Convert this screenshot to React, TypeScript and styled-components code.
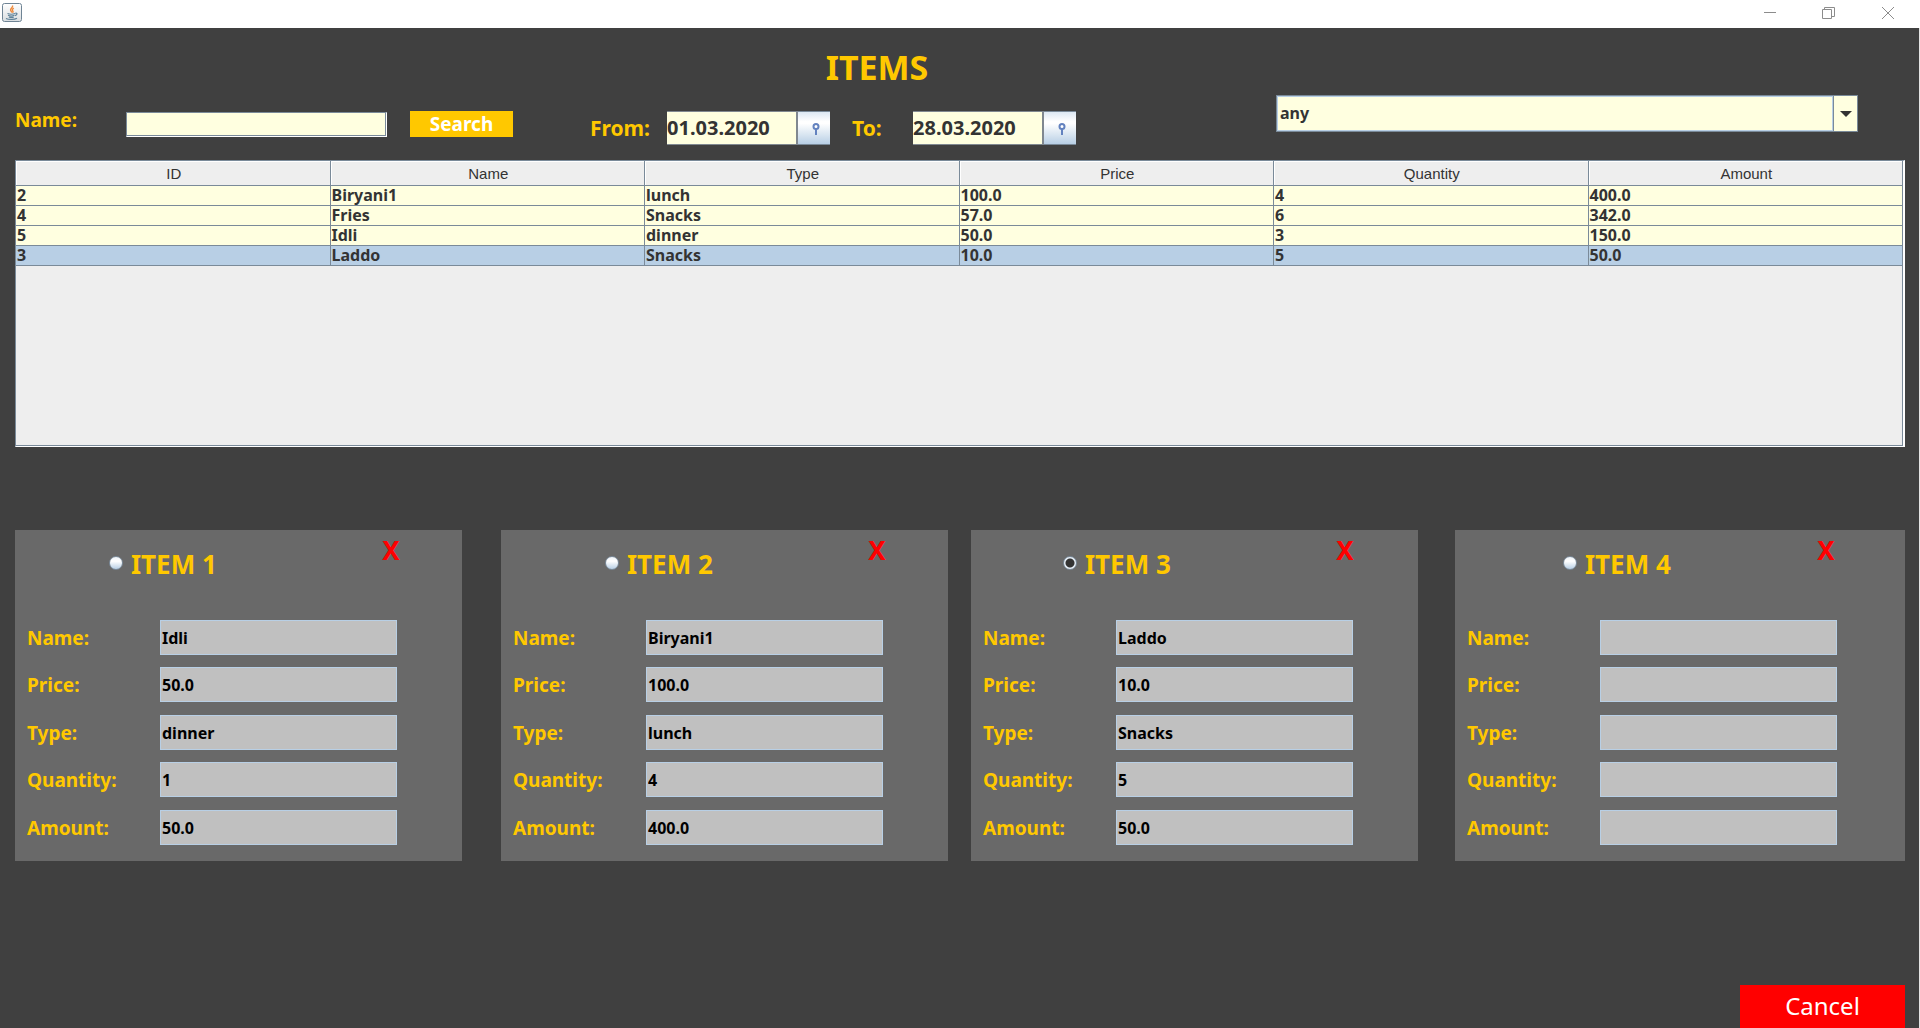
import React, { useState } from 'react';
import styled, { createGlobalStyle } from 'styled-components';

const gold = '#ffc800';
const cream = '#ffffe0';
const slate = '#7a8a99';
const sky = '#b8cfe5';
const sans = '"Noto Sans", "Open Sans", sans-serif';

const GlobalStyle = createGlobalStyle`
  * { box-sizing: border-box; }
  body { margin: 0; background: #404040; font-family: ${sans}; }
  button, input, select { font-family: inherit; margin: 0; }
`;

const Frame = styled.div`
  display: flex;
  flex-direction: column;
  min-height: 100vh;
`;

const TitleBar = styled.header`
  display: flex;
  align-items: flex-start;
  justify-content: space-between;
  height: 28px;
  padding: 2px 3px 0 2px;
  background: #fff;
`;

const WindowButtons = styled.div`
  display: flex;
`;

const WindowButton = styled.button`
  display: flex;
  align-items: center;
  justify-content: center;
  width: 59px;
  height: 22px;
  padding: 0;
  border: 0;
  background: none;
`;

const Main = styled.main`
  display: flex;
  flex: 1;
  flex-direction: column;
  padding: 0 14px 0 15px;
  border-right: 1px solid #e4e4e4;
`;

const Heading = styled.h1`
  margin: 0;
  padding: 17px 166px 0 0;
  color: ${gold};
  font-size: 34px;
  line-height: 44px;
  text-align: center;
`;

const Filters = styled.form`
  display: flex;
  align-items: flex-start;
  height: 65px;
  margin-top: 6px;
`;

const SearchGroup = styled.div`
  display: flex;
  align-items: center;
  padding-top: 15px;
`;

const NameLabel = styled.label`
  width: 111px;
  padding-bottom: 8px;
  color: ${gold};
  font-size: 19px;
  font-weight: 700;
  line-height: 20px;
`;

const NameInput = styled.input`
  width: 261px;
  height: 25px;
  padding: 0 3px;
  border: 1px solid ${slate};
  outline: 0;
  background: ${cream};
  box-shadow: inset -1px -1px 0 ${slate};
  border-right-color: #fff;
  border-bottom-color: #fff;
  font-size: 16px;
`;

const SearchButton = styled.button`
  width: 103px;
  height: 26px;
  margin-left: 23px;
  padding: 0;
  border: 0;
  background: ${gold};
  color: #fff;
  font-size: 19px;
  font-weight: 700;
  line-height: 26px;
`;

const DateGroup = styled.div<{ $lead: number; $labelWidth: number }>`
  display: grid;
  grid-template-columns: ${(p) => p.$labelWidth}px 131px 32px;
  align-items: center;
  margin-left: ${(p) => p.$lead}px;
  padding-top: 16px;
`;

const DateLabel = styled.label`
  color: ${gold};
  font-size: 21px;
  font-weight: 700;
  line-height: 32px;
`;

const DateInput = styled.input`
  width: 100%;
  height: 34px;
  padding: 0 0 1px;
  border: solid #808890;
  border-width: 1px 2px 1px 0;
  outline: 0;
  background: ${cream};
  color: #333;
  font-size: 20px;
  font-weight: 700;
`;

const DateButton = styled.button`
  display: flex;
  align-items: center;
  justify-content: center;
  height: 34px;
  padding: 2px 0 0 4px;
  border: solid ${slate};
  border-width: 1px 0;
  background: linear-gradient(#dde8f3, #fff 30%, #fff 36%, ${sky});
`;

const TypePicker = styled.div`
  display: grid;
  flex: 1;
  margin: 0 47px 0 200px;
`;

const TypeSelect = styled.select`
  grid-area: 1 / 1;
  width: 100%;
  height: 37px;
  padding: 0 30px 1px 3px;
  border: 1px solid ${slate};
  border-radius: 0;
  outline: 0;
  appearance: none;
  background: ${cream};
  color: #333;
  font-size: 16px;
  font-weight: 700;
  box-shadow: inset 1px 1px 0 ${sky}, inset 0 -1px 0 ${sky};
`;

const PickerArrow = styled.span`
  display: flex;
  grid-area: 1 / 1;
  align-items: center;
  justify-content: center;
  justify-self: end;
  width: 23px;
  height: 35px;
  margin: 1px 1px 0 0;
  background: ${cream};
  box-shadow: -1px 0 0 ${slate}, -2px 0 0 ${sky};
  pointer-events: none;
`;

const TablePane = styled.section`
  height: 287px;
  border: 1px solid ${slate};
  border-right: 2px solid #fff;
  border-bottom: 1px solid #fff;
  background: #eee;
  box-shadow: inset -1px -1px 0 ${slate};
`;

const Table = styled.table`
  width: 100%;
  border-spacing: 0;
  table-layout: fixed;
`;

const HeadCell = styled.th`
  height: 25px;
  padding: 2px 0 0 2px;
  border: solid ${slate};
  border-width: 0 1px 1px 0;
  background: #eee;
  box-shadow: inset 1px 1px 0 #fff;
  color: #333;
  font: 400 15px/22px "Liberation Sans", Arial, sans-serif;
`;

const Row = styled.tr<{ $selected: boolean }>`
  background: ${(p) => (p.$selected ? sky : cream)};
`;

const Cell = styled.td`
  height: 20px;
  padding: 0 1px;
  border: solid ${slate};
  border-width: 0 1px 1px 0;
  color: #333;
  font-size: 16px;
  font-weight: 700;
  line-height: 19px;
`;

const Cards = styled.section`
  display: flex;
  margin-top: 83px;
`;

const Card = styled.article<{ $lead: number; $share: number }>`
  flex: ${(p) => p.$share} 1 0;
  min-width: 0;
  margin-left: ${(p) => p.$lead}px;
  padding-bottom: 16px;
  background: #696969;
`;

const CardHead = styled.div<{ $closeAt: number }>`
  display: grid;
  grid-template-columns: ${(p) => p.$closeAt}px 48px;
  height: 90px;
  align-items: start;
`;

const CardTitle = styled.label<{ $indent: number }>`
  display: flex;
  align-items: center;
  gap: 8px;
  padding: 16px 0 0 ${(p) => p.$indent}px;
  color: ${gold};
  font-size: 26px;
  font-weight: 700;
  line-height: 36px;
`;

const Radio = styled.input`
  width: 14px;
  height: 14px;
  margin-bottom: 2px;
  border: 1px solid ${slate};
  border-radius: 50%;
  appearance: none;
  background: linear-gradient(#eef3f9, #fff 35%, ${sky});
  &:checked {
    background: radial-gradient(circle, #333 0 4px, #e8f0f8 5px);
  }
`;

const CloseButton = styled.button`
  height: 40px;
  padding: 0;
  border: 0;
  background: none;
  color: #f00;
  font-size: 26px;
  font-weight: 700;
  line-height: 40px;
`;

const Fields = styled.div`
  display: grid;
  row-gap: 12px;
`;

const FieldRow = styled.div`
  display: grid;
  grid-template-columns: 133px 237px;
  align-items: center;
  height: 35px;
  padding-left: 12px;
  &:nth-child(2n + 3) {
    margin-top: 1px;
  }
`;

const FieldLabel = styled.label`
  padding-top: 1px;
  color: ${gold};
  font-size: 19px;
  font-weight: 700;
  line-height: 34px;
`;

const FieldInput = styled.input`
  width: 100%;
  height: 35px;
  padding: 0 1px;
  border: 1px solid ${sky};
  outline: 0;
  background: #c0c0c0;
  color: #000;
  font-size: 16px;
  font-weight: 700;
`;

const CancelButton = styled.button`
  align-self: flex-end;
  width: 165px;
  height: 43px;
  margin-top: auto;
  padding: 0 0 1px;
  border: 0;
  background: #f00;
  color: #fff;
  font-size: 24px;
  line-height: 42px;
`;

const columns = ['ID', 'Name', 'Type', 'Price', 'Quantity', 'Amount'];

const rows = [
  ['2', 'Biryani1', 'lunch', '100.0', '4', '400.0'],
  ['4', 'Fries', 'Snacks', '57.0', '6', '342.0'],
  ['5', 'Idli', 'dinner', '50.0', '3', '150.0'],
  ['3', 'Laddo', 'Snacks', '10.0', '5', '50.0'],
];

const fieldNames = ['Name', 'Price', 'Type', 'Quantity', 'Amount'];

const cards = [
  { lead: 0, share: 447, indent: 94, closeAt: 352, values: ['Idli', '50.0', 'dinner', '1', '50.0'] },
  { lead: 39, share: 447, indent: 104, closeAt: 352, values: ['Biryani1', '100.0', 'lunch', '4', '400.0'] },
  { lead: 23, share: 447, indent: 92, closeAt: 350, values: ['Laddo', '10.0', 'Snacks', '5', '50.0'] },
  { lead: 37, share: 450, indent: 108, closeAt: 347, values: ['', '', '', '', ''] },
];

const JavaIcon = () => (
  <svg width="20" height="20" viewBox="0 0 20 20" aria-hidden="true">
    <defs>
      <linearGradient id="tile" x1="0" y1="0" x2="0" y2="1">
        <stop offset="0" stopColor="#fff" />
        <stop offset="1" stopColor="#d9dde0" />
      </linearGradient>
    </defs>
    <rect x="0.5" y="1.5" width="19" height="18" rx="2" fill="url(#tile)" stroke="#6f8495" />
    <path d="M10.5 3.5c1 2-2.6 2.8-1.9 4.8.3.9 1 1.400 1.200 2.200M11.800 6.200c-1.800 1-1.600 2-.9 2.900.4.6.1 1.200-.4 1.700" fill="none" stroke="#ee8a3c" strokeWidth="1.4" />
    <path d="M5.500 11.500c2 .8 5.500.8 7.500 0M6 13.300c1.800.8 4.800.8 6.500 0M6.800 15c1.500.6 3.600.6 5 0M13.300 11.300c2.300-.5 2.300 1.600-.3 2.300M4 16.500c3 1.300 8.500 1.200 11-.3" fill="none" stroke="#5f8299" strokeWidth="1.2" />
  </svg>
);

const PinIcon = () => (
  <svg width="8" height="12" viewBox="0 0 8 12" aria-hidden="true">
    <circle cx="4" cy="3.5" r="2.5" fill="#fff" stroke="#6382bf" strokeWidth="2" />
    <path d="M4 5.5V12" stroke="#6382bf" strokeWidth="2" />
  </svg>
);

export default function App() {
  const [active, setActive] = useState(2);

  return (
    <Frame>
      <GlobalStyle />
      <TitleBar>
        <JavaIcon />
        <WindowButtons>
          <WindowButton aria-label="Minimize">
            <svg width="12" height="12" viewBox="0 0 12 12"><path d="M0 5.5H12" stroke="#8c8c8c" /></svg>
          </WindowButton>
          <WindowButton aria-label="Restore">
            <svg width="13" height="12" viewBox="0 0 13 12" fill="none" stroke="#8c8c8c">
              <path d="M0.5 2.5H9.5V11.5H0.5ZM2.5 2.5V0.5H12.5V9.5H9.5" />
            </svg>
          </WindowButton>
          <WindowButton aria-label="Close">
            <svg width="12" height="12" viewBox="0 0 12 12"><path d="M0 0L12 12M12 0L0 12" stroke="#8c8c8c" /></svg>
          </WindowButton>
        </WindowButtons>
      </TitleBar>

      <Main>
        <Heading>ITEMS</Heading>

        <Filters onSubmit={(e) => e.preventDefault()}>
          <SearchGroup>
            <NameLabel htmlFor="search-name">Name:</NameLabel>
            <NameInput id="search-name" type="text" />
            <SearchButton type="submit">Search</SearchButton>
          </SearchGroup>
          <DateGroup $lead={77} $labelWidth={77}>
            <DateLabel htmlFor="date-from">From:</DateLabel>
            <DateInput id="date-from" type="text" defaultValue="01.03.2020" />
            <DateButton type="button" aria-label="Pick start date"><PinIcon /></DateButton>
          </DateGroup>
          <DateGroup $lead={22} $labelWidth={61}>
            <DateLabel htmlFor="date-to">To:</DateLabel>
            <DateInput id="date-to" type="text" defaultValue="28.03.2020" />
            <DateButton type="button" aria-label="Pick end date"><PinIcon /></DateButton>
          </DateGroup>
          <TypePicker>
            <TypeSelect aria-label="Item type" defaultValue="any">
              <option>any</option>
              <option>lunch</option>
              <option>dinner</option>
              <option>Snacks</option>
            </TypeSelect>
            <PickerArrow>
              <svg width="12" height="6" viewBox="0 0 12 6"><path d="M0 0H12L6 6Z" fill="#333" /></svg>
            </PickerArrow>
          </TypePicker>
        </Filters>

        <TablePane>
          <Table>
            <thead>
              <tr>
                {columns.map((c) => <HeadCell key={c} scope="col">{c}</HeadCell>)}
              </tr>
            </thead>
            <tbody>
              {rows.map((r) => (
                <Row key={r[0]} $selected={r[0] === '3'}>
                  {r.map((v, i) => <Cell key={columns[i]}>{v}</Cell>)}
                </Row>
              ))}
            </tbody>
          </Table>
        </TablePane>

        <Cards>
          {cards.map((card, n) => (
            <Card key={n} $lead={card.lead} $share={card.share}>
              <CardHead $closeAt={card.closeAt}>
                <CardTitle $indent={card.indent}>
                  <Radio type="radio" name="item" checked={active === n} onChange={() => setActive(n)} />
                  {`ITEM ${n + 1}`}
                </CardTitle>
                <CloseButton type="button">X</CloseButton>
              </CardHead>
              <Fields>
                {fieldNames.map((name, i) => (
                  <FieldRow key={name}>
                    <FieldLabel htmlFor={`item-${n}-${name}`}>{name}:</FieldLabel>
                    <FieldInput id={`item-${n}-${name}`} type="text" defaultValue={card.values[i]} />
                  </FieldRow>
                ))}
              </Fields>
            </Card>
          ))}
        </Cards>

        <CancelButton type="button">Cancel</CancelButton>
      </Main>
    </Frame>
  );
}
